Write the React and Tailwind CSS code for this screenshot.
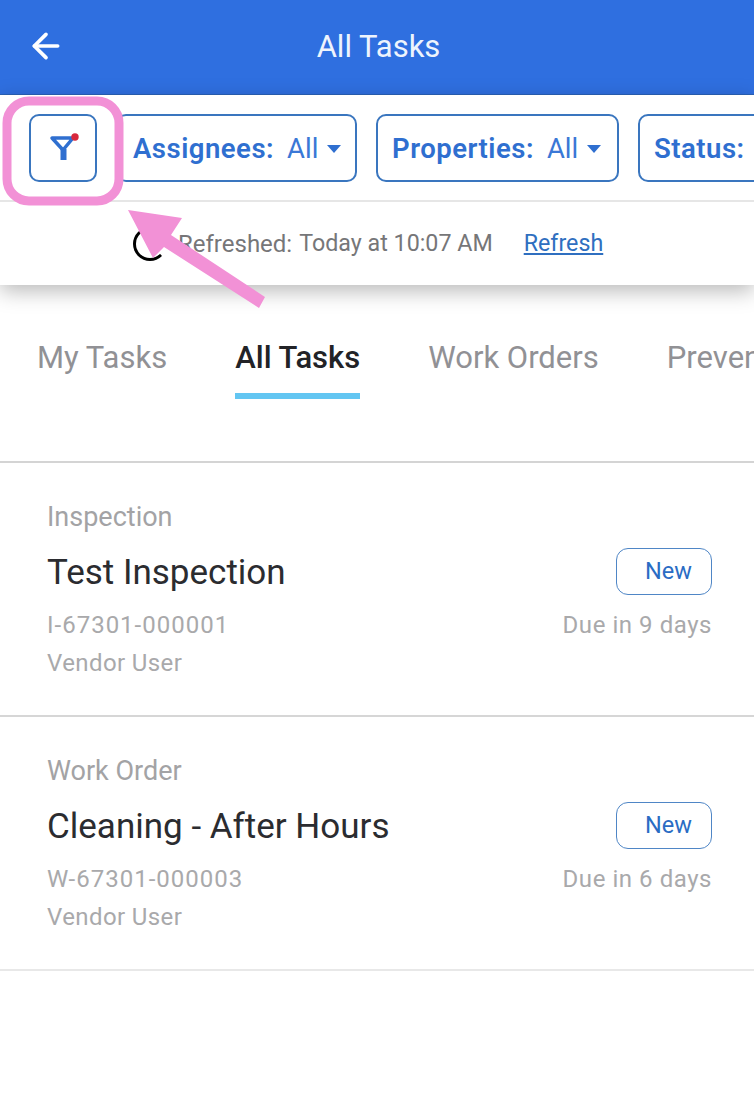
import React from 'react';
import { ArrowLeft } from 'lucide-react';

const tasks = [
  { type: 'Inspection', title: 'Test Inspection', code: 'I-67301-000001', due: 'Due in 9 days', border: 'border-[#d6d6d6]' },
  { type: 'Work Order', title: 'Cleaning - After Hours', code: 'W-67301-000003', due: 'Due in 6 days', border: 'border-[#e8e8e8]' },
];

function FilterChip({ label, className }) {
  return (
    <div className={`h-[68px] shrink-0 flex items-center pt-[2px] rounded-[10px] border-2 border-[#3a76bf] text-[#2f6fd0] text-[27.5px] ${className}`}>
      <span className="font-semibold tracking-[0.5px]">{label}:</span>
      <span className="ml-[13px] text-[#3a78d6]">All</span>
      <span className="ml-[9px] w-0 h-0 border-x-[7px] border-x-transparent border-t-[8px] border-t-[#2f6fd0]" />
    </div>
  );
}

function TaskRow({ task }) {
  return (
    <div className={`h-[254px] border-b-2 ${task.border} pr-[42px] pl-[47px] pt-[37px] flex justify-between`}>
      <div>
        <div className="text-[27px] leading-[34px] text-[#a3a3a5]">{task.type}</div>
        <div className="mt-[17px] text-[35px] leading-[44px] text-[#2b2c30]">{task.title}</div>
        <div className="mt-[15px] text-[24px] leading-[30px] text-[#a9a9ab] tracking-[1px]">{task.code}</div>
        <div className="mt-[8px] text-[24px] leading-[30px] text-[#a9a9ab] tracking-[0.4px]">Vendor User</div>
      </div>
      <div className="flex flex-col items-end pt-[48px]">
        <div className="w-[96px] h-[47px] pt-[1px] rounded-[12px] border border-[#4f86c6] flex items-center justify-end pr-[19px] text-[23.5px] text-[#2a6cc4]">New</div>
        <div className="mt-[15px] text-[24px] leading-[30px] text-[#a9a9ab] tracking-[0.55px]">{task.due}</div>
      </div>
    </div>
  );
}

export default function App() {
  return (
    <div className="relative w-[754px] h-[1108px] overflow-hidden bg-white font-['Roboto',sans-serif]">
      <header className="h-[95px] bg-[#2f6fe0] border-b border-[#2a62b8] flex items-center justify-center relative pl-[3px]">
        <ArrowLeft className="absolute left-[26px] top-[26px] w-[40px] h-[40px] text-white" strokeWidth={2.2} />
        <h1 className="text-[31px] text-[#eef4fd]">All Tasks</h1>
      </header>

      <div className="shadow-[0_6px_20px_rgba(0,0,0,0.28)] relative z-10 bg-white">
        <div className="h-[107px] border-b-2 border-[#e6e6e6] pl-[29px] pt-[19px] flex gap-[19px] overflow-hidden">
          <div className="w-[68px] h-[68px] shrink-0 rounded-[10px] border-2 border-[#3a76bf] flex items-center justify-center">
            <svg width="36" height="36" viewBox="0 0 36 36">
              <path d="M7 8 H28 L18 20 Z" fill="none" stroke="#2f6fd0" strokeWidth="3.5" strokeLinejoin="round" />
              <path d="M15.5 19 H21.5 V30 H15.5 Z" fill="#2f6fd0" />
              <circle cx="30" cy="7" r="3.7" fill="#d8283c" />
            </svg>
          </div>
          <FilterChip label="Assignees" className="w-[241px] pl-[15px]" />
          <FilterChip label="Properties" className="w-[243px] pl-[14px]" />
          <FilterChip label="Status" className="w-[200px] pl-[14px]" />
        </div>
        <div className="h-[83px] flex items-center pl-[133px] text-[23.25px] text-[#767678]">
          <span className="w-[34px] h-[34px] rounded-full border-[3px] border-black border-r-transparent shrink-0" />
          <span className="ml-[11px] text-[24px]">Refreshed:</span>
          <span className="ml-[7px]">Today at 10:07 AM</span>
          <span className="ml-[31px] text-[#2f6fc0] underline underline-offset-2">Refresh</span>
        </div>
      </div>

      <nav className="h-[178px] border-b-2 border-[#d4d4d4] pl-[37px] pt-[53px] flex gap-[68px] text-[31px] leading-[40px] text-[#919195] whitespace-nowrap overflow-hidden">
        <span>My Tasks</span>
        <div className="shrink-0">
          <div className="font-medium text-[#222327]">All Tasks</div>
          <div className="mt-[15px] h-[6px] bg-[#63c6f2]" />
        </div>
        <span>Work Orders</span>
        <span>Preventive</span>
      </nav>

      {tasks.map(t => <TaskRow key={t.code} task={t} />)}

      {/* pink annotation over the screenshot */}
      <svg className="absolute inset-0 z-20 pointer-events-none" width="754" height="1108" viewBox="0 0 754 1108">
        <rect x="7" y="101" width="112" height="100" rx="22" fill="none" stroke="#f291d6" strokeWidth="9" />
        <path d="M128 210 L182 218 L171 235 L265 297 L259 308 L164 247 L153 258 Z" fill="#f291d6" />
      </svg>
    </div>
  );
}
